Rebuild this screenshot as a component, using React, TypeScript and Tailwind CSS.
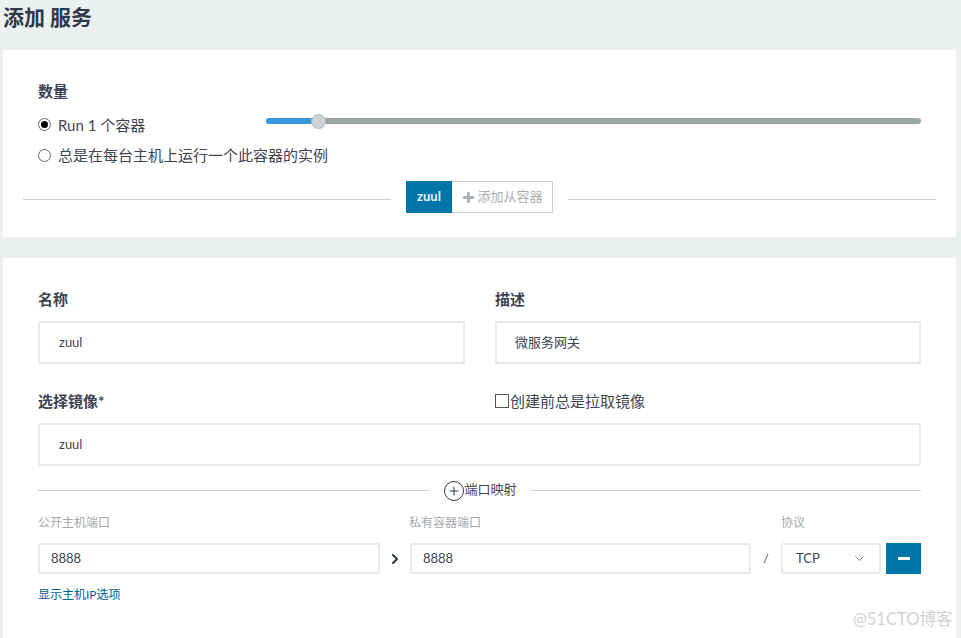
import { ChevronDown, ChevronRight, Plus } from "lucide-react";

const fontStack = "font-['Lato','Noto_Sans_CJK_SC',sans-serif]";

function Field({ value, className }: { value: string; className?: string }) {
  return (
    <div
      className={`flex items-center border-2 border-[#e9e9e9] rounded-[2px] bg-white text-[13px] text-[#3f4552] ${className ?? ""}`}
    >
      {value}
    </div>
  );
}

export default function App() {
  return (
    <div className={`relative h-[638px] w-[961px] overflow-hidden bg-[#edf0f1] pl-[3px] pr-[5px] text-[#3f4552] ${fontStack}`}>
      <h1 className="h-[50px] pt-[3px] text-[21px] leading-[28px] font-bold text-[#2e3a47]">添加 服务</h1>

      {/* Scale card */}
      <div className="h-[187px] bg-white pt-[32px]">
        <div className="pl-[35px] text-[15px] leading-[18px] font-bold">数量</div>
        <div className="mt-[14px] flex h-[20px] items-center pl-[35px] pr-[35px]">
          <div className="flex w-[228px] items-center gap-[7px]">
            <span className="flex h-[13px] w-[13px] items-center justify-center rounded-full border border-[#666]">
              <span className="h-[7px] w-[7px] rounded-full bg-black" />
            </span>
            <span className="text-[15px] leading-[20px] mt-[1px]">Run 1 个容器</span>
          </div>
          <div className="relative -mt-[6px] flex h-[6px] flex-1 rounded-full bg-[#9ba5a5]">
            <div className="h-[6px] w-[52px] rounded-l-full bg-[#3498db]" />
            <div className="absolute left-[45px] top-[-4.5px] h-[15px] w-[15px] rounded-full border border-[#b4b9bd] bg-[#ced3d7]" />
          </div>
        </div>
        <div className="mt-[11px] flex h-[20px] items-center gap-[7px] pl-[35px]">
          <span className="h-[13px] w-[13px] rounded-full border border-[#666]" />
          <span className="text-[15px] leading-[20px]">总是在每台主机上运行一个此容器的实例</span>
        </div>
        <div className="mt-[16px] flex h-[32px] items-center px-[20px]">
          <div className="mt-[4px] h-px flex-1 bg-[#ccd0d3]" />
          <div className="mx-[15px] flex h-[32px]">
            <div className="flex w-[46px] items-center justify-center bg-[#0075a8] text-[13px] font-bold text-[#e8f4f9]">zuul</div>
            <div className="flex w-[101px] items-center justify-center gap-px border border-[#ccd0d3] border-l-0 text-[13px] text-[#a9aeb1]">
              <Plus size={15} strokeWidth={4.5} className="text-[#a9b0b4]" />
              添加从容器
            </div>
          </div>
          <div className="mt-[4px] h-px flex-1 bg-[#ccd0d3]" />
        </div>
      </div>

      {/* Service form card */}
      <div className="mt-[21px] h-[380px] bg-white px-[35px] pt-[32px]">
        <div className="flex gap-[30px]">
          <div className="w-[427px]">
            <div className="text-[15px] leading-[18px] font-bold">名称</div>
            <Field value="zuul" className="mt-[13px] h-[43px] pl-[19px]" />
          </div>
          <div className="flex-1">
            <div className="text-[15px] leading-[18px] font-bold">描述</div>
            <Field value="微服务网关" className="mt-[13px] h-[43px] pl-[18px]" />
          </div>
        </div>

        <div className="mt-[28px] flex gap-[30px]">
          <div className="w-[427px] text-[15px] leading-[18px] font-bold">选择镜像*</div>
          <div className="flex items-center gap-px text-[15px] leading-[18px]">
            <span className="h-[14px] w-[14px] border border-[#555]" />
            创建前总是拉取镜像
          </div>
        </div>
        <Field value="zuul" className="mt-[13px] h-[43px] pl-[19px] pt-px" />

        <div className="mt-[13px] flex h-[22px] items-center">
          <div className="h-px flex-1 bg-[#ccd0d3]" />
          <div className="ml-[15px] mr-[14px] flex items-center">
            <span className="mt-[2px] flex h-[20px] w-[20px] items-center justify-center rounded-full border-[1.5px] border-[#2e3a47] text-[#2e3a47]">
              <Plus size={14} strokeWidth={1.75} />
            </span>
            <span className="text-[13px] leading-[18px] -mt-[2px] ml-px">端口映射</span>
          </div>
          <div className="h-px flex-1 bg-[#ccd0d3]" />
        </div>

        <div className="mt-[13px] flex text-[12px] leading-[18px] text-[#a5a8ab]">
          <div className="w-[371px]">公开主机端口</div>
          <div className="w-[372px]">私有容器端口</div>
          <div>协议</div>
        </div>
        <div className="mt-[11px] flex h-[31px] items-center">
          <Field value="8888" className="h-[31px] w-[342px] pl-[11px]" />
          <div className="flex w-[30px] justify-center">
            <ChevronRight size={16} strokeWidth={3} className="text-[#2e3a47]" />
          </div>
          <Field value="8888" className="h-[31px] w-[341px] pl-[11px]" />
          <div className="w-[30px] text-center text-[12px]">/</div>
          <div className="flex h-[31px] w-[100px] items-center justify-between rounded-[2px] border-2 border-[#e9e9e9] pl-[13px] pr-[12px] text-[13px]">
            TCP
            <ChevronDown size={15} strokeWidth={1.25} />
          </div>
          <div className="ml-[5px] flex h-[31px] w-[35px] items-center justify-center bg-[#0075a8]">
            <span className="h-[3px] w-[12px] bg-white" />
          </div>
        </div>
        <div className="mt-[12px] text-[12px] leading-[18px] text-[#00618f]">显示主机IP选项</div>
      </div>

      {/* Image host watermark */}
      <div className="absolute left-[853px] top-[608px] text-[16.5px] leading-[22px] text-[#d2d2d2]">@51CTO博客</div>
    </div>
  );
}
